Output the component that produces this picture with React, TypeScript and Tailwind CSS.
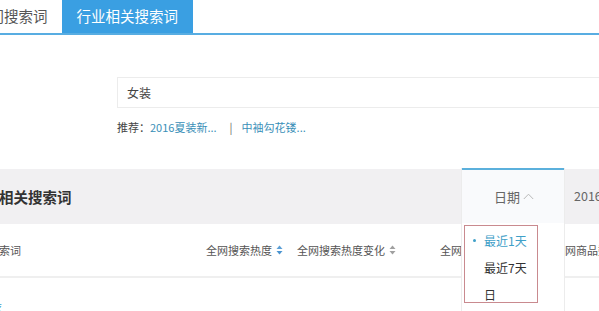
import React from "react";

function SortIcon({ active }: { active?: boolean }) {
  const up = active ? "#5b9fd6" : "#a0a0a0";
  const down = active ? "#4a94d0" : "#a0a0a0";
  return (
    <svg width="7" height="10" viewBox="0 0 7 10" className="ml-[4px] shrink-0">
      <path d="M3.5 0.5 L6.5 4 L0.5 4 Z" fill={up} />
      <path d="M0.5 6 L6.5 6 L3.5 9.5 Z" fill={down} />
    </svg>
  );
}

export default function App() {
  const font = { fontFamily: '"Noto Sans CJK SC", "Noto Sans", sans-serif' };
  return (
    <div
      className="relative w-[599px] h-[311px] overflow-hidden bg-white flex flex-col text-[#555]"
      style={font}
    >
      {/* tabs */}
      <div className="flex h-[35px] shrink-0 border-b-[2px] border-[#58ade2]">
        <div className="flex items-center ml-[-25px] pr-[14px] text-[14.5px] leading-none text-[#555] whitespace-nowrap">
          热门搜索词
        </div>
        <div className="flex items-center bg-[#3a9fe2] px-[15px] text-[14.5px] leading-none text-white whitespace-nowrap">
          行业相关搜索词
        </div>
      </div>

      {/* search */}
      <div className="ml-[117px] mt-[42px] h-[31px] w-[520px] shrink-0 border border-[#ececec] flex items-center pl-[9px] text-[12px] text-[#444]">
        女装
      </div>
      <div className="ml-[117px] mt-[11px] h-[16px] flex items-center text-[11px] whitespace-nowrap">
        <span className="text-[#444]">推荐：</span>
        <span className="text-[#3a8fb8]">2016夏装新...</span>
        <span className="text-[#666] ml-[13px] mr-[9px]">|</span>
        <span className="text-[#3a8fb8]">中袖勾花镂...</span>
      </div>

      {/* gray band */}
      <div className="mt-[34px] h-[55px] shrink-0 bg-[#f1f0f2] flex items-center whitespace-nowrap">
        <div className="w-[575px] shrink-0 text-[14.5px] font-bold text-[#333] ml-[-1px]">相关搜索词</div>
        <div className="text-[12.5px] text-[#666]">2016</div>
      </div>

      {/* table header */}
      <div className="h-[54px] shrink-0 border-b-[2px] border-[#efefef] flex items-center text-[11px] text-[#555] whitespace-nowrap">
        <div className="w-[218px] shrink-0 ml-[-12px]">搜索词</div>
        <div className="w-[91px] shrink-0 flex items-center">
          全网搜索热度
          <SortIcon active />
        </div>
        <div className="w-[143px] shrink-0 flex items-center">
          全网搜索热度变化
          <SortIcon />
        </div>
        <div className="w-[114px] shrink-0">全网搜索点击率</div>
        <div className="shrink-0">全网商品数</div>
      </div>

      {/* first data row */}
      <div className="flex-1 flex items-start pt-[21px] text-[11px] whitespace-nowrap">
        <div className="w-[218px] shrink-0 ml-[-20px] text-[#3fa0c8]">连衣</div>
        <div className="w-[91px] shrink-0 pt-[10px] text-[#dcdcdc]">12,345</div>
        <div className="w-[143px] shrink-0 pt-[10px] text-[#dcdcdc]">+12.34%</div>
        <div className="w-[114px] shrink-0 pt-[10px] text-[#dcdcdc]">12.34%</div>
        <div className="shrink-0 pt-[10px] text-[#dcdcdc]">12,345</div>
      </div>

      {/* date dropdown overlay */}
      <div className="absolute left-[461px] top-[168px] w-[104px] h-[143px] z-10 flex flex-col bg-white border-x border-[#ececec]">
        <div className="h-[55px] shrink-0 border-t-[2px] border-[#5bb0dc] bg-[#f9fafc] flex items-center justify-center pl-[2px] text-[13px] text-[#666]">
          <span>日期</span>
          <svg width="11" height="7" viewBox="0 0 11 7" className="ml-[3px]">
            <path d="M0.8 6 L5.5 1.2 L10.2 6" fill="none" stroke="#b8b8b8" strokeWidth="1" />
          </svg>
        </div>
        <div className="ml-[2px] mt-[2px] w-[74px] h-[78px] border border-[#c98a8f] bg-white flex flex-col text-[12px]">
          <div className="h-[27px] mt-[1px] flex items-center text-[#3fa0c8]">
            <span className="w-[19px] flex pl-[8px]">
              <span className="block w-[3px] h-[3px] rounded-full bg-[#3fa0c8]" />
            </span>
            <span>最近1天</span>
          </div>
          <div className="h-[27px] flex items-center pl-[19px] text-[#333]">最近7天</div>
          <div className="h-[21px] flex items-end pl-[19px] leading-[14px] text-[#333]">日</div>
        </div>
      </div>
    </div>
  );
}
